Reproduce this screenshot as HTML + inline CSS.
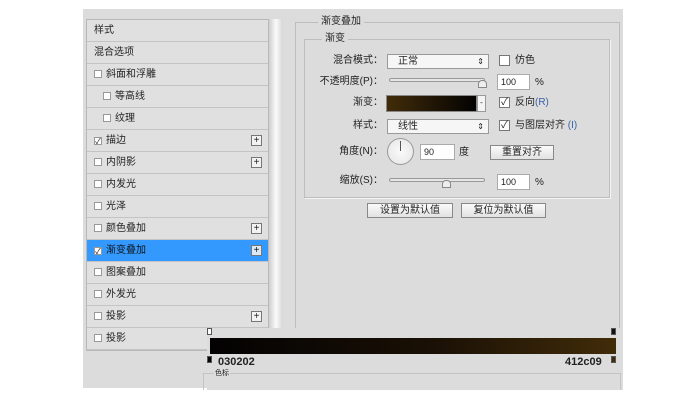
<!DOCTYPE html><html><head><meta charset="utf-8"><style>
*{box-sizing:border-box;margin:0;padding:0}
body{width:690px;height:400px;background:#fff;position:relative;overflow:hidden;font-family:"Liberation Sans","Noto Sans CJK SC",sans-serif;font-size:10px;color:#222}
.a{position:absolute;line-height:12px}
#main{left:83px;top:9px;width:540px;height:379px;background:#dcdcdc}
.row{position:absolute;left:87px;width:181px;height:22px;border-bottom:1px solid #c4c4c4;background:#e0e0e0;line-height:21px;padding-left:7px}
.cb{display:inline-block;width:8px;height:8px;border:1px solid #999;background:#fff;vertical-align:-1px;margin-right:4px;font-size:8px;line-height:7px;text-align:center}
.plus{position:absolute;right:6px;top:5px;width:11px;height:11px;border:1px solid #777;background:#f2f2f2;font-size:10px;line-height:9px;text-align:center}
.inp{position:absolute;background:#fff;border:1px solid #aaa;height:16px;line-height:14px;padding-left:3px;font-size:9px}
.sel{position:absolute;background:#f6f6f6;border:1px solid #999;height:15px;line-height:13px;padding-left:10px;font-size:10px}
.btn{position:absolute;border:1px solid #888;background:linear-gradient(#fafafa,#e2e2e2);height:15px;line-height:13px;text-align:center;font-size:10px}
.lbl{position:absolute;text-align:right;font-size:10px;line-height:12px}
.ck{position:absolute;width:11px;height:11px;border:1px solid #777;background:#fff;font-size:10px;line-height:9px;text-align:center}
</style></head><body>
<div id="main" class="a"></div>
<div class="a" style="left:86px;top:19px;width:183px;height:332px;border:1px solid #b8b8b8;background:#e0e0e0"></div>
<div class="a" style="left:269px;top:19px;width:14px;height:331px;background:linear-gradient(90deg,#cfcfcf,#fafafa,#d6d6d6)"></div>
<div class="row" style="top:20px">样式</div>
<div class="row" style="top:42px">混合选项</div>
<div class="row" style="top:64px"><span class="cb"></span>斜面和浮雕</div>
<div class="row" style="top:86px;padding-left:16px"><span class="cb"></span>等高线</div>
<div class="row" style="top:108px;padding-left:16px"><span class="cb"></span>纹理</div>
<div class="row" style="top:130px"><span class="cb">✓</span>描边<span class="plus">+</span></div>
<div class="row" style="top:152px"><span class="cb"></span>内阴影<span class="plus">+</span></div>
<div class="row" style="top:174px"><span class="cb"></span>内发光</div>
<div class="row" style="top:196px"><span class="cb"></span>光泽</div>
<div class="row" style="top:218px"><span class="cb"></span>颜色叠加<span class="plus">+</span></div>
<div class="row" style="top:240px;background:#3399ff;color:#111"><span class="cb">✓</span>渐变叠加<span class="plus" style="background:#dbe9f7">+</span></div>
<div class="row" style="top:262px"><span class="cb"></span>图案叠加</div>
<div class="row" style="top:284px"><span class="cb"></span>外发光</div>
<div class="row" style="top:306px"><span class="cb"></span>投影<span class="plus">+</span></div>
<div class="row" style="top:328px"><span class="cb"></span>投影</div>
<div class="a" style="left:295px;top:22px;width:325px;height:310px;border:1px solid #bdbdbd;border-bottom:none"></div>
<div class="a" style="left:318px;top:16px;background:#dcdcdc;padding:0 3px">渐变叠加</div>
<div class="a" style="left:304px;top:39px;width:306px;height:159px;border:1px solid #bdbdbd;box-shadow:1px 1px 0 #f4f4f4"></div>
<div class="a" style="left:322px;top:33px;background:#dcdcdc;padding:0 3px">渐变</div>
<div class="lbl" style="left:300px;width:83px;top:55px">混合模式：</div>
<div class="sel" style="left:387px;top:54px;width:102px">正常<span style="position:absolute;right:4px;font-size:8px">⇕</span></div>
<div class="ck" style="left:499px;top:55px"></div><div class="a" style="left:515px;top:55px">仿色</div>
<div class="lbl" style="left:300px;width:83px;top:76px">不透明度(P)：</div>
<div class="a" style="left:389px;top:78px;width:96px;height:4px;border:1px solid #999;border-radius:2px;background:#e6e6e6"></div>
<div class="a" style="left:478px;top:80px;width:9px;height:8px;background:#eee;border:1px solid #888;border-radius:4px 4px 0 0"></div>
<div class="inp" style="left:497px;top:74px;width:33px">100</div><div class="a" style="left:535px;top:77px">%</div>
<div class="lbl" style="left:300px;width:83px;top:97px">渐变：</div>
<div class="a" style="left:386px;top:95px;width:91px;height:17px;border:1px solid #888;background:linear-gradient(90deg,#412c09,#030202)"></div>
<div class="a" style="left:477px;top:95px;width:9px;height:17px;border:1px solid #999;background:#f4f4f4;font-size:8px;text-align:center;line-height:14px">-</div>
<div class="ck" style="left:499px;top:97px">✓</div><div class="a" style="left:515px;top:97px">反向<span style="color:#3a63a8">(R)</span></div>
<div class="lbl" style="left:300px;width:83px;top:120px">样式：</div>
<div class="sel" style="left:387px;top:119px;width:102px">线性<span style="position:absolute;right:4px;font-size:8px">⇕</span></div>
<div class="ck" style="left:499px;top:120px">✓</div><div class="a" style="left:515px;top:120px">与图层对齐 <span style="color:#3a63a8">(I)</span></div>
<div class="lbl" style="left:300px;width:83px;top:146px">角度(N)：</div>
<div class="a" style="left:387px;top:138px;width:27px;height:27px;border:1px solid #999;border-radius:50%;background:radial-gradient(#fafafa,#e4e4e4)"></div>
<div class="a" style="left:400px;top:141px;width:1px;height:10px;background:#555"></div>
<div class="inp" style="left:420px;top:144px;width:35px">90</div><div class="a" style="left:459px;top:147px">度</div>
<div class="btn" style="left:490px;top:145px;width:64px">重置对齐</div>
<div class="lbl" style="left:300px;width:83px;top:175px">缩放(S)：</div>
<div class="a" style="left:389px;top:178px;width:96px;height:4px;border:1px solid #999;border-radius:2px;background:#e6e6e6"></div>
<div class="a" style="left:442px;top:180px;width:9px;height:8px;background:#eee;border:1px solid #888;border-radius:4px 4px 0 0"></div>
<div class="inp" style="left:497px;top:174px;width:33px">100</div><div class="a" style="left:535px;top:177px">%</div>
<div class="btn" style="left:367px;top:203px;width:86px">设置为默认值</div>
<div class="btn" style="left:461px;top:203px;width:85px">复位为默认值</div>
<div class="a" style="left:207px;top:328px;width:416px;height:62px;background:#dcdcdc"></div>
<div class="a" style="left:210px;top:338px;width:406px;height:16px;background:linear-gradient(90deg,#030202,#1a1005 55%,#412c09)"></div>
<div class="a" style="left:207px;top:328px;width:5px;height:7px;border:1px solid #555;background:#fff"></div>
<div class="a" style="left:611px;top:328px;width:5px;height:7px;border:1px solid #555;background:#111"></div>
<div class="a" style="left:207px;top:356px;width:5px;height:7px;border:1px solid #555;background:#030202"></div>
<div class="a" style="left:611px;top:356px;width:5px;height:7px;border:1px solid #555;background:#412c09"></div>
<div class="a" style="left:218px;top:356px;font-weight:bold;font-size:11px">030202</div>
<div class="a" style="left:565px;top:356px;font-weight:bold;font-size:11px">412c09</div>
<div class="a" style="left:203px;top:373px;width:418px;height:17px;border:1px solid #c4c4c4;border-bottom:none"></div>
<div class="a" style="left:214px;top:368px;font-size:7px;background:#dcdcdc;padding:0 1px">色标</div>
</body></html>
